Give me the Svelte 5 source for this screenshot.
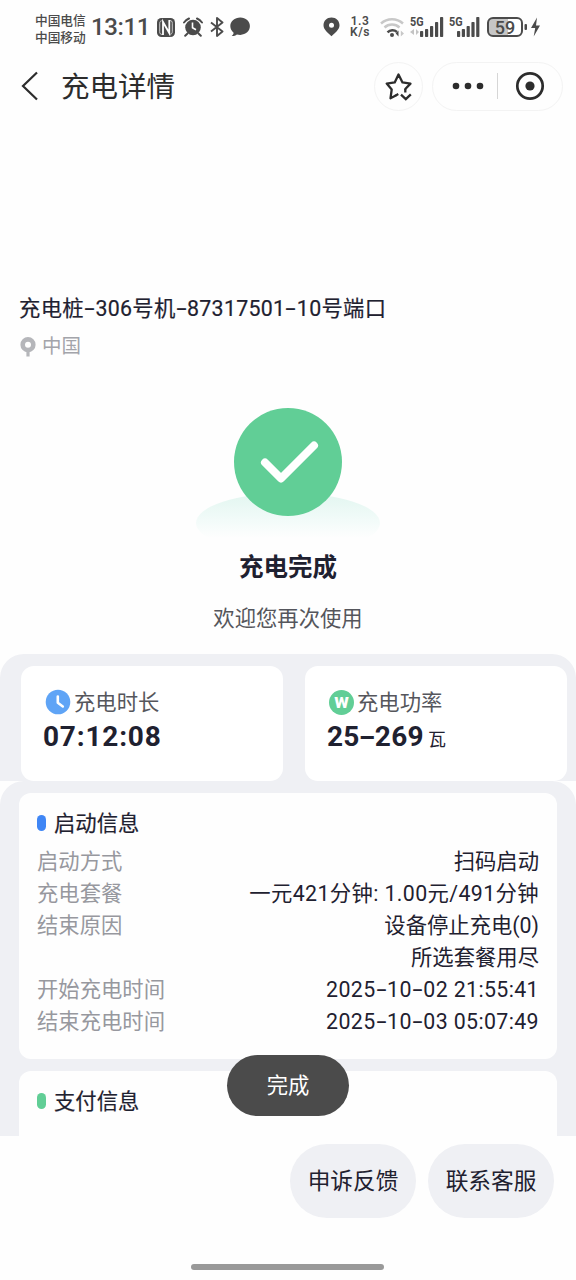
<script>
	const startInfo = [
		{ label: '启动方式', values: ['扫码启动'] },
		{ label: '充电套餐', values: ['一元421分钟: 1.00元/491分钟'] },
		{ label: '结束原因', values: ['设备停止充电(0)', '所选套餐用尽'] },
		{ label: '开始充电时间', values: ['2025-10-02 21:55:41'] },
		{ label: '结束充电时间', values: ['2025-10-03 05:07:49'] }
	];
	const bars = [6, 8, 11, 15, 20];
</script>

{#snippet dashed(text)}
	{#each text.split('-') as part, i}{#if i > 0}<span class="dash">-</span>{/if}{part}{/each}
{/snippet}

{#snippet signal(arrows)}
	<div class="signal">
		<span class="net">5G</span>
		<svg width="34" height="22" viewBox="0 0 34 22">
			{#if arrows}
				<path d="M4 13v6L0 16zM6 13v6l3-3z" fill="#c4c4c4" />
			{/if}
			{#each bars as h, i}
				<rect x={arrows ? 10 + i * 5 : 8 + i * 4.8} y={21 - h} width="3.2" height={h} rx="0.8" fill="#4b4b4b" />
			{/each}
		</svg>
	</div>
{/snippet}

<div class="screen">
	<div class="status">
		<div class="carrier">
			<span>中国电信</span>
			<span>中国移动</span>
		</div>
		<span class="time">13:11</span>
		<svg class="nfc" width="18" height="19" viewBox="0 0 18 19">
			<rect width="18" height="19" rx="4.5" fill="#4b4b4b" />
			<path d="M6 17V4l6.300 11V2" fill="none" stroke="#fff" stroke-width="1.8" />
			<path d="M6 16.500c-2.800 0-3.300-.8-3.300-3V5.500c0-1.500.5-2.500 2-2.800M12.300 2.500c2.500 0 3 .8 3 3v8c0 1.500-.5 2.500-2 2.800" fill="none" stroke="#fff" stroke-width="0.7" />
		</svg>
		<svg class="alarm" width="20" height="20" viewBox="0 0 20 20">
			<circle cx="10" cy="10.500" r="7.800" fill="#4b4b4b" />
			<path d="M1 5.500a14 14 0 0 1 5-4M19 5.500a14 14 0 0 0-5-4M4.500 16.500l-2.300 2.300M15.500 16.500l2.300 2.300" fill="none" stroke="#4b4b4b" stroke-width="2" stroke-linecap="round" />
			<path d="M9.500 5.500v5.300l3.500 2" fill="none" stroke="#fff" stroke-width="1.600" />
		</svg>
		<svg class="bt" width="14" height="20" viewBox="0 0 14 20">
			<path d="M1 5.500l11.500 9L7 19V1l5.500 4.500L1 14.500" fill="none" stroke="#4b4b4b" stroke-width="1.900" stroke-linejoin="round" />
		</svg>
		<svg class="chat" width="20" height="20" viewBox="0 0 20 20">
			<path d="M10.300.5C4.700.5.300 4.200.300 9.100c0 2.700 1.300 5 3.300 6.600 0 1.300-.8 2.300-1.900 3.300 1.900.1 3.800-.3 5.200-1.500 1.100.3 2.200.4 3.400.4 5.500 0 9.600-3.900 9.600-8.800S15.800.5 10.300.5z" fill="#4b4b4b" />
		</svg>
		<span class="spacer"></span>
		<svg class="pin" width="17" height="20" viewBox="0 0 17 20">
			<path d="M8.500.5C3.900.5.500 3.900.500 8.200c0 4.600 4.600 7.600 8 11 3.400-3.400 8-6.400 8-11C16.500 3.900 13.100.5 8.500.5z" fill="#4b4b4b" />
			<circle cx="8.500" cy="8.200" r="2.500" fill="#fff" />
		</svg>
		<div class="speed">
			<span>1.3</span>
			<span>K/s</span>
		</div>
		<svg class="wifi" width="25" height="21" viewBox="0 0 25 21">
			<path d="M1 6.500a16.500 16.500 0 0 1 22 0M4.500 10.500a11 11 0 0 1 15 0" fill="none" stroke="#c8c8c8" stroke-width="2.500" />
			<path d="M7.500 15.300a7 7 0 0 1 9.500-.3" fill="none" stroke="#4b4b4b" stroke-width="2.400" />
			<circle cx="12" cy="18" r="2" fill="#4b4b4b" />
			<path d="M18.500 13.500v6l-2.800-3z" fill="#4b4b4b" />
			<path d="M20.800 13.500v6l3.200-3z" fill="#c8c8c8" />
		</svg>
		{@render signal(true)}
		{@render signal(false)}
		<div class="battery"><span>59</span></div>
		<svg class="bolt" width="18" height="20" viewBox="0 0 18 20">
			<rect x="1.500" y="7" width="2.500" height="6" rx="1" fill="#4b4b4b" />
			<path d="M14 0.500L8 11h4.200l-1.500 8.500L17 8.500h-4z" fill="#4b4b4b" />
		</svg>
	</div>

	<header>
		<svg class="back" width="18" height="30" viewBox="0 0 18 30">
			<path d="M16 1.500L2 15l14 13.500" fill="none" stroke="#2c2c2c" stroke-width="2.200" />
		</svg>
		<h1>充电详情</h1>
		<button class="fav" aria-label="收藏">
			<svg width="28" height="30" viewBox="0 0 28 30">
				<path d="M10.300 24.800L5.500 27.300 6.700 18.500 1.700 12.600l8-1.200L13.500 3.500l4 7.900 8 1.200-5.200 5.400" fill="none" stroke="#2c2c2c" stroke-width="2.300" stroke-linejoin="round" stroke-linecap="round" />
				<path d="M10.300 24.800l3-1.700M20.300 18v3.500" fill="none" stroke="#2c2c2c" stroke-width="2.300" />
				<path d="M16 23.700l4.800 4.500 5-4.800" fill="none" stroke="#2c2c2c" stroke-width="2.300" />
			</svg>
		</button>
		<div class="capsule">
			<svg width="32" height="8" viewBox="0 0 32 8" fill="#2c2c2c">
				<circle cx="4" cy="4" r="3.300" />
				<circle cx="16" cy="4" r="3.300" />
				<circle cx="28" cy="4" r="3.300" />
			</svg>
			<i></i>
			<svg width="30" height="30" viewBox="0 0 30 30">
				<circle cx="15" cy="15" r="12.700" fill="none" stroke="#2c2c2c" stroke-width="2.700" />
				<circle cx="15" cy="15" r="4.600" fill="#2c2c2c" />
			</svg>
		</div>
	</header>

	<main>
		<div class="device">
			<h2>{@render dashed('充电桩-306号机-87317501-10号端口')}</h2>
			<p>
				<svg width="16" height="20" viewBox="0 0 16 20">
					<circle cx="8" cy="7.700" r="5.300" fill="none" stroke="#b5b6ba" stroke-width="4.600" />
					<path d="M6.400 13h3.200v6.500H6.400z" fill="#b5b6ba" />
				</svg>
				中国
			</p>
		</div>

		<div class="result">
			<svg width="188" height="140" viewBox="0 0 188 140">
				<defs>
					<linearGradient id="glow" x1="0" y1="0" x2="0" y2="1">
						<stop offset="0" stop-color="#e2f6f0" />
						<stop offset="0.450" stop-color="#f2fbf9" />
						<stop offset="0.750" stop-color="#fefefe" />
					</linearGradient>
				</defs>
				<ellipse cx="94" cy="117" rx="92" ry="30" fill="url(#glow)" />
				<circle cx="94" cy="56" r="54" fill="#61ce96" />
				<path d="M71 56.500l16 16L120 39.500" fill="none" stroke="#fff" stroke-width="8" stroke-linecap="round" stroke-linejoin="round" />
			</svg>
			<strong>充电完成</strong>
			<p>欢迎您再次使用</p>
		</div>

		<section class="stats">
			<div class="stat">
				<div class="name">
					<svg width="26" height="26" viewBox="0 0 26 26">
						<circle cx="13" cy="13" r="12.300" fill="#5fa4f6" />
						<path d="M12.800 7.500v6.300l5 3.700" fill="none" stroke="#fff" stroke-width="2.600" stroke-linecap="round" stroke-linejoin="round" />
					</svg>
					<span>充电时长</span>
				</div>
				<div class="value">07:12:08</div>
			</div>
			<div class="stat">
				<div class="name">
					<span class="watt">w</span>
					<span>充电功率</span>
				</div>
				<div class="value range">{@render dashed('25-269')}<small>瓦</small></div>
			</div>
		</section>

		<section class="details">
			<div class="card">
				<h3><i class="blue"></i><span>启动信息</span></h3>
				{#each startInfo as row}
					<div class="row">
						<span class="label">{row.label}</span>
						<div class="values">
							{#each row.values as value}
								<span class:spaced={/\d{3}/.test(value)}>{@render dashed(value)}</span>
							{/each}
						</div>
					</div>
				{/each}
			</div>
			<div class="card">
				<h3><i class="green"></i><span>支付信息</span></h3>
			</div>
		</section>
	</main>

	<footer>
		<button>申诉反馈</button>
		<button>联系客服</button>
	</footer>
	<div class="toast">完成</div>
	<div class="home"></div>
</div>

<style>
	:global(body) {
		margin: 0;
		background: #fff;
	}

	.screen {
		position: relative;
		display: flex;
		flex-direction: column;
		width: 576px;
		height: 1280px;
		overflow: hidden;
		background: #fefefe;
		color: #1f2130;
		font-family: Roboto, 'Noto Sans CJK SC', sans-serif;
		font-size: 21.33px;
	}

	h1,
	h2,
	h3,
	p {
		margin: 0;
		font-weight: 400;
	}

	svg {
		display: block;
		flex: none;
	}

	button {
		border: 0;
		padding: 0;
		font: inherit;
		color: inherit;
	}

	.dash {
		display: inline-block;
		width: 0.54em;
		text-align: center;
		transform: scaleX(1.7);
	}

	.status {
		display: flex;
		align-items: center;
		box-sizing: border-box;
		height: 54px;
		padding: 0 35px;
		color: #4b4b4b;
	}

	.carrier {
		display: flex;
		flex-direction: column;
		width: 52px;
		margin-top: 3px;
		font-size: 12.7px;
		font-weight: 500;
		line-height: 17px;
		white-space: nowrap;
	}

	.time {
		width: 66px;
		margin-left: 4px;
		font-size: 24px;
		font-weight: 500;
		letter-spacing: -0.4px;
		white-space: nowrap;
	}

	.alarm {
		margin-left: 8px;
	}

	.bt {
		margin-left: 7px;
	}

	.chat {
		margin-left: 6px;
	}

	.spacer {
		flex: 1;
	}

	.speed {
		display: flex;
		flex-direction: column;
		align-items: center;
		width: 22px;
		margin: 0 9px 0 9px;
		font-size: 12px;
		font-weight: 600;
		line-height: 11px;
		letter-spacing: 0.5px;
	}

	.speed span {
		height: 11px;
	}

	.signal {
		position: relative;
		width: 34px;
		margin-left: 5px;
	}

	.net {
		position: absolute;
		left: 0;
		top: 0;
		font-size: 12px;
		font-weight: 700;
		line-height: 12px;
		transform: scaleX(0.9);
		transform-origin: left;
	}

	.battery {
		display: flex;
		align-items: center;
		justify-content: center;
		box-sizing: border-box;
		width: 36px;
		height: 20px;
		margin-left: 4px;
		border: 2px solid #4b4b4b;
		border-radius: 6px;
		background: linear-gradient(90deg, #c6c6c6 59%, #fff 59%);
		font-size: 18px;
		font-weight: 500;
	}

	header {
		display: flex;
		align-items: center;
		height: 64px;
		padding: 0 13px 0 21px;
	}

	h1 {
		flex: 1;
		margin: -4px 0 0 22px;
		font-size: 28.5px;
		color: #2c2c2c;
	}

	.fav {
		display: flex;
		align-items: center;
		justify-content: center;
		box-sizing: border-box;
		width: 49px;
		height: 49px;
		border: 1px solid #f3f3f3;
		border-radius: 50%;
		background: none;
	}

	.capsule {
		display: flex;
		align-items: center;
		box-sizing: border-box;
		width: 131px;
		height: 49px;
		margin-left: 9px;
		padding-left: 19px;
		border: 1px solid #f3f3f3;
		border-radius: 25px;
	}

	.capsule i {
		width: 1px;
		height: 26px;
		margin: 0 17px 0 13px;
		background: #d6d6d6;
	}

	main {
		height: 1018px;
		overflow: hidden;
	}

	.device {
		height: 246px;
		box-sizing: border-box;
		padding: 175px 19px 0;
	}

	h2 {
		font-size: 21.33px;
		line-height: 32px;
		letter-spacing: 0.3px;
		-webkit-text-stroke: 0.2px;
	}

	.device p {
		display: flex;
		align-items: center;
		gap: 6px;
		margin-top: 6px;
		padding-left: 1px;
		font-size: 19.5px;
		line-height: 32px;
		color: #a3a4aa;
	}

	.result {
		display: flex;
		flex-direction: column;
		align-items: center;
		height: 290px;
	}

	.result svg {
		margin-top: 42px;
	}

	.result strong {
		font-size: 24.5px;
		line-height: 36px;
		margin-top: 4px;
	}

	.result p {
		margin-top: 17px;
		line-height: 32px;
		color: #55565c;
	}

	.stats {
		display: flex;
		gap: 22px;
		height: 115px;
		padding: 12px 9px 0 21px;
		border-radius: 24px 24px 0 0;
		background: #eff0f4;
	}

	.stat {
		box-sizing: border-box;
		width: 262px;
		height: 115px;
		padding: 20px 22px 0;
		border-radius: 13px;
		background: #fff;
	}

	.name {
		display: flex;
		align-items: center;
		gap: 3px;
		height: 32px;
		padding-left: 2px;
		color: #55565c;
	}

	.name span:last-child {
		padding-bottom: 3px;
	}

	.watt {
		width: 25px;
		height: 25px;
		border-radius: 50%;
		background: #61ce96;
		color: #fff;
		font-size: 20px;
		font-weight: 800;
		line-height: 23px;
		text-align: center;
	}

	.value {
		font-size: 28px;
		font-weight: 700;
		line-height: 38px;
		letter-spacing: 0.8px;
	}

	.range {
		letter-spacing: 0.3px;
	}

	.value small {
		margin-left: 4px;
		font-size: 18px;
		font-weight: 400;
	}

	.details {
		display: flex;
		flex-direction: column;
		gap: 12px;
		height: 400px;
		padding: 12px 19px;
		border-radius: 24px 24px 0 0;
		background: #eff0f4;
	}

	.card {
		box-sizing: border-box;
		flex: none;
		height: 266px;
		padding: 14px 18px 0;
		border-radius: 12px;
		background: #fefefe;
	}

	h3 {
		display: flex;
		align-items: center;
		gap: 8px;
		height: 32px;
		margin-bottom: 7px;
		font-size: 21.33px;
		-webkit-text-stroke: 0.2px;
	}

	h3 span {
		padding-bottom: 3px;
	}

	h3 i {
		width: 9px;
		height: 16px;
		border-radius: 4.5px;
	}

	.blue {
		background: #3f86f5;
	}

	.green {
		background: #61ce96;
	}

	.row {
		display: flex;
		justify-content: space-between;
		line-height: 32px;
	}

	.label {
		color: #97989e;
	}

	.values {
		display: flex;
		flex-direction: column;
		align-items: flex-end;
	}

	.spaced {
		letter-spacing: 0.38px;
	}

	footer {
		display: flex;
		justify-content: flex-end;
		gap: 12px;
		padding: 8px 22px 0 0;
	}

	footer button {
		width: 126px;
		height: 74px;
		padding-bottom: 4px;
		border-radius: 37px;
		background: #eff0f4;
		font-size: 22.7px;
	}

	.toast {
		position: absolute;
		left: 227px;
		top: 1055px;
		width: 122px;
		height: 61px;
		border-radius: 31px;
		background: #4b4b4b;
		color: #fff;
		line-height: 61px;
		text-align: center;
	}

	.home {
		position: absolute;
		left: 191px;
		top: 1264px;
		width: 193px;
		height: 6px;
		border-radius: 3px;
		background: #999;
	}
</style>
